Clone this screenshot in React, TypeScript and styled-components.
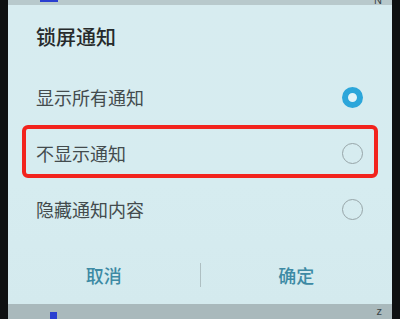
import React from 'react';
import styled, { createGlobalStyle } from 'styled-components';

const GlobalStyle = createGlobalStyle`
  html, body {
    margin: 0;
    padding: 0;
    background: #0d0f10;
  }
  body {
    font-family: "Noto Sans CJK SC", "Noto Sans", sans-serif;
  }
`;

const Screen = styled.div`
  width: 400px;
  height: 319px;
  display: flex;
  background: #0d0f10;
  overflow: hidden;
`;

const Bezel = styled.div<{ $w: number }>`
  width: ${({ $w }) => $w}px;
  flex-shrink: 0;
  background: #0e1112;
`;

const Content = styled.div`
  flex: 1;
  display: flex;
  flex-direction: column;
`;

const StatusStrip = styled.div<{ $h: number; $bg: string }>`
  height: ${({ $h }) => $h}px;
  background: ${({ $bg }) => $bg};
  position: relative;
  flex-shrink: 0;
  overflow: hidden;
`;

const BlueMark = styled.span<{ $left: number; $top: number; $w: number; $h: number }>`
  position: absolute;
  left: ${({ $left }) => $left}px;
  top: ${({ $top }) => $top}px;
  width: ${({ $w }) => $w}px;
  height: ${({ $h }) => $h}px;
  background: #2a3fd0;
`;

const CornerGlyph = styled.span<{ $top: number }>`
  position: absolute;
  right: 10px;
  top: ${({ $top }) => $top}px;
  font-family: "Liberation Sans", sans-serif;
  font-size: 11px;
  line-height: 11px;
  color: #3a4446;
`;

const Dialog = styled.div`
  flex: 1;
  display: flex;
  flex-direction: column;
  background: linear-gradient(180deg, #d7ecf0 0%, #d6ecf0 60%, #d4eaee 100%);
`;

const Title = styled.div`
  height: 64px;
  box-sizing: border-box;
  padding: 20px 28px;
  font-size: 20px;
  line-height: 24px;
  font-weight: 500;
  color: #262a2b;
`;

const Row = styled.div<{ $highlight?: boolean }>`
  position: relative;
  height: 56px;
  display: flex;
  align-items: center;
  justify-content: space-between;
  padding: 0 29px 0 28px;
  font-size: 18px;
  color: #434b4d;

  &::after {
    content: '';
    display: ${({ $highlight }) => ($highlight ? 'block' : 'none')};
    position: absolute;
    inset: 0 14px 3px 14px;
    border: 4px solid #f2231d;
    border-radius: 6px;
  }
`;

const Radio = styled.span<{ $checked?: boolean }>`
  width: 21px;
  height: 21px;
  box-sizing: border-box;
  border-radius: 50%;
  border: ${({ $checked }) => ($checked ? '6px solid #2ca6da' : '1px solid #97a5a8')};
  background: ${({ $checked }) => ($checked ? '#e2f3f8' : 'transparent')};
`;

const Footer = styled.div`
  margin-top: auto;
  margin-bottom: 5px;
  height: 48px;
  display: flex;
  align-items: center;
`;

const ActionButton = styled.div`
  flex: 1;
  text-align: center;
  font-size: 18px;
  font-weight: 500;
  color: #3d8aa4;
`;

const Divider = styled.div`
  width: 1px;
  height: 24px;
  background: #aebfc2;
`;

const options = [
  { label: '显示所有通知', checked: true },
  { label: '不显示通知', highlight: true },
  { label: '隐藏通知内容' },
];

const App: React.FC = () => {
  return (
    <>
      <GlobalStyle />
      <Screen>
        <Bezel $w={8} />
        <Content>
          <StatusStrip $h={5} $bg="#b8c9cc">
            <BlueMark $left={32} $top={0} $w={18} $h={2} />
            <CornerGlyph $top={-5}>N</CornerGlyph>
          </StatusStrip>
          <Dialog>
            <Title>锁屏通知</Title>
            {options.map((o) => (
              <Row key={o.label} $highlight={o.highlight}>
                <span>{o.label}</span>
                <Radio $checked={o.checked} />
              </Row>
            ))}
            <Footer>
              <ActionButton>取消</ActionButton>
              <Divider />
              <ActionButton>确定</ActionButton>
            </Footer>
          </Dialog>
          <StatusStrip $h={15} $bg="#a9b9bc">
            <BlueMark $left={42} $top={8} $w={7} $h={7} />
            <CornerGlyph $top={2}>z</CornerGlyph>
          </StatusStrip>
        </Content>
        <Bezel $w={8} />
      </Screen>
    </>
  );
};

export default App;
